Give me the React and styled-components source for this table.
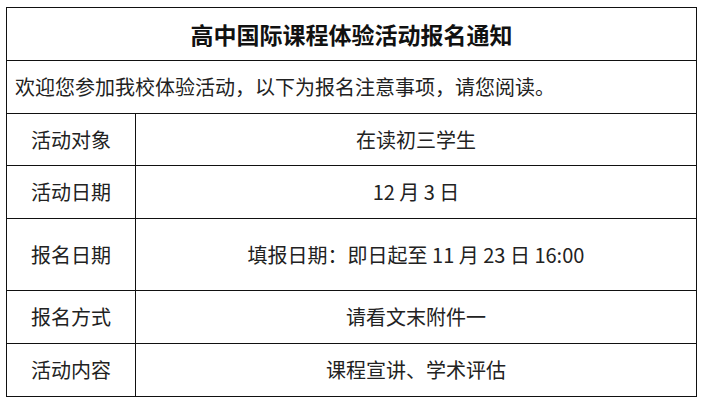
import React from 'react';
import styled, { createGlobalStyle } from 'styled-components';

const GlobalStyle = createGlobalStyle`
    html, body {
        margin: 0;
        padding: 0;
        background: #fff;
    }
    body {
        font-family: "Noto Sans CJK SC", "Noto Sans", sans-serif;
        color: #222;
    }
`;

const Page = styled.div`
    padding: 7px 0 0 6px;
`;

const Table = styled.table`
    width: 691px;
    border-collapse: collapse;
    table-layout: fixed;
    border: 1px solid #111;
`;

const Row = styled.tr`
    height: ${({ $h }) => $h}px;
`;

const TitleCell = styled.td`
    border: 1px solid #111;
    padding: 0;
    text-align: center;
    font-size: 23px;
    font-weight: 700;
    color: #111;
    line-height: 1;
`;

const IntroCell = styled.td`
    border: 1px solid #111;
    padding: 0 0 0 8px;
    font-size: 20px;
    line-height: 1;
`;

const LabelCell = styled.td`
    width: 129px;
    border: 1px solid #111;
    padding: 0;
    text-align: center;
    font-size: 20px;
    line-height: 1;
`;

const ValueCell = styled.td`
    border: 1px solid #111;
    padding: 0;
    text-align: center;
    font-size: 20px;
    line-height: 1;
`;

const rows = [
    { label: '活动对象', value: '在读初三学生', h: 52 },
    { label: '活动日期', value: '12 月 3 日', h: 53 },
    { label: '报名日期', value: '填报日期：即日起至 11 月 23 日 16:00', h: 72 },
    { label: '报名方式', value: '请看文末附件一', h: 53 },
    { label: '活动内容', value: '课程宣讲、学术评估', h: 53 },
];

export default function App() {
    return (
        <Page>
            <GlobalStyle />
            <Table>
                <colgroup>
                    <col style={{ width: '129px' }} />
                    <col />
                </colgroup>
                <tbody>
                    <Row $h={53}>
                        <TitleCell colSpan={2}>高中国际课程体验活动报名通知</TitleCell>
                    </Row>
                    <Row $h={53}>
                        <IntroCell colSpan={2}>欢迎您参加我校体验活动，以下为报名注意事项，请您阅读。</IntroCell>
                    </Row>
                    {rows.map((r) => (
                        <Row key={r.label} $h={r.h}>
                            <LabelCell>{r.label}</LabelCell>
                            <ValueCell>{r.value}</ValueCell>
                        </Row>
                    ))}
                </tbody>
            </Table>
        </Page>
    );
}
